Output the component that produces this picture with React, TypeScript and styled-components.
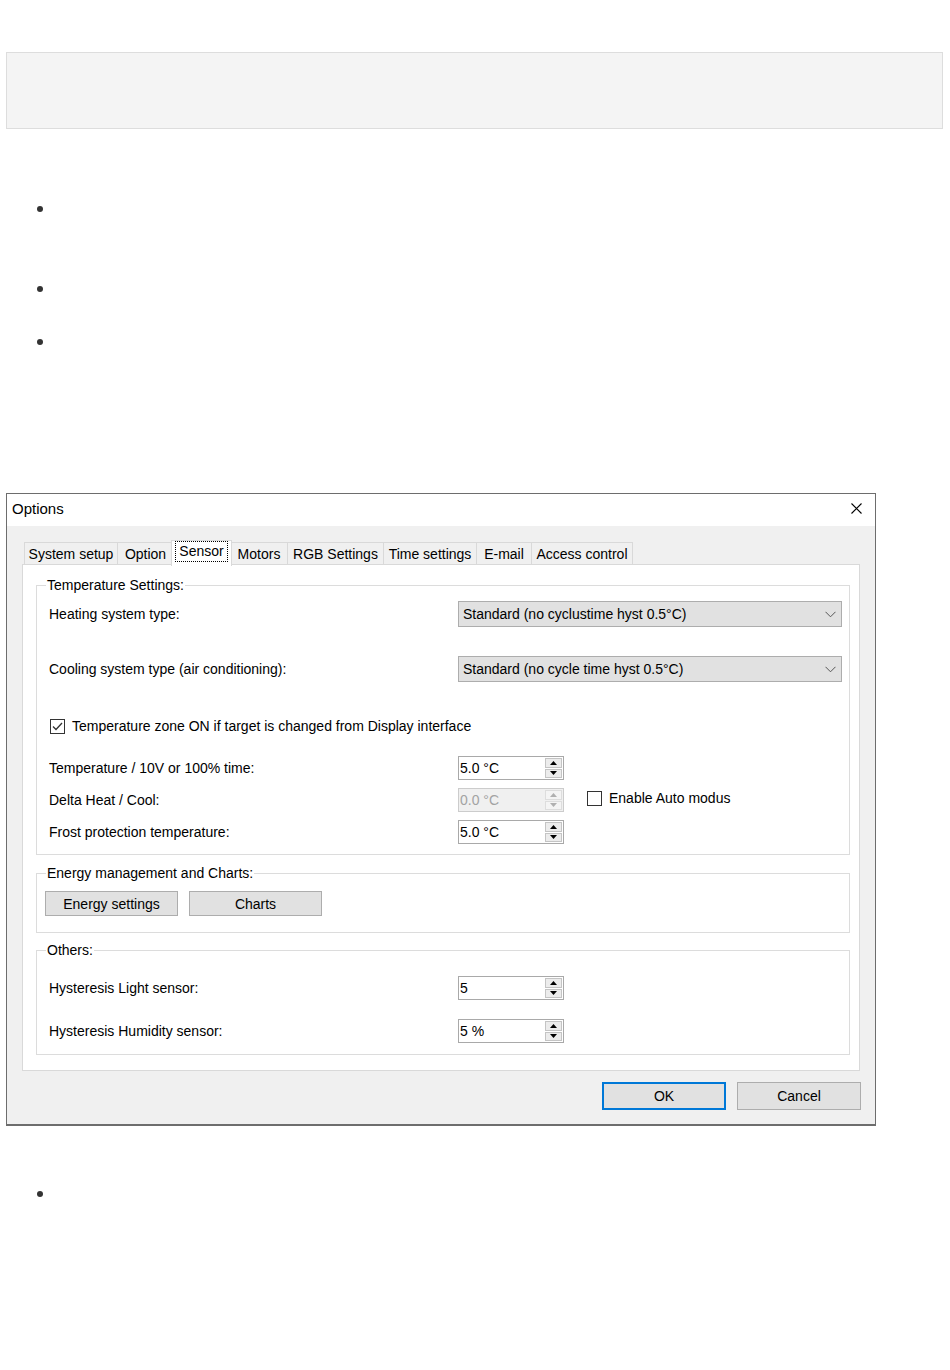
import React from 'react';
import styled, { createGlobalStyle } from 'styled-components';

const Global = createGlobalStyle`
  html, body { margin: 0; padding: 0; background: #ffffff; }
  body {
    font-family: "Liberation Sans", Arial, sans-serif;
    font-size: 14px;
    color: #000000;
  }
`;

const Page = styled.div`
  width: 950px;
  min-height: 1370px;
  box-sizing: border-box;
  padding: 52px 0 0 6px;
`;

const NoteBox = styled.div`
  width: 937px;
  height: 77px;
  box-sizing: border-box;
  background: #f4f4f4;
  border: 1px solid #dddddd;
`;

const BulletList = styled.ul<{ $mt: number }>`
  list-style: none;
  margin: ${p => p.$mt}px 0 0 0;
  padding: 0 0 0 31px;
`;

const Bullet = styled.li<{ $h: number }>`
  height: ${p => p.$h}px;
  box-sizing: border-box;
  padding-top: 6px;
  &::before {
    content: '';
    display: block;
    width: 6px;
    height: 6px;
    border-radius: 50%;
    background: #333333;
  }
`;

const Dialog = styled.div`
  width: 870px;
  box-sizing: border-box;
  margin-top: 140px;
  border: 1px solid #6d6d6d;
  border-bottom-width: 2px;
  background: #f0f0f0;
`;

const TitleBar = styled.div`
  height: 32px;
  box-sizing: border-box;
  background: #ffffff;
  display: flex;
  align-items: center;
  justify-content: space-between;
  padding: 0 13px 3px 5px;
  font-size: 15px;
`;

const DialogBody = styled.div`
  padding: 14px 15px 14px 15px;
`;

const TabStrip = styled.div`
  display: flex;
  align-items: flex-end;
  height: 24px;
  padding-left: 2px;
`;

const Tab = styled.div<{ $w: number; $active?: boolean }>`
  position: relative;
  z-index: ${p => (p.$active ? 2 : 1)};
  box-sizing: border-box;
  flex-shrink: 0;
  width: ${p => (p.$active ? p.$w + 4 : p.$w)}px;
  height: ${p => (p.$active ? 26 : 22)}px;
  margin: ${p => (p.$active ? '0 -2px -2px -2px' : '0')};
  padding-bottom: ${p => (p.$active ? 4 : 0)}px;
  border-top: 1px solid #d9d9d9;
  border-left: 1px solid #d9d9d9;
  border-right: ${p => (p.$active ? '1px solid #d9d9d9' : 'none')};
  background: ${p => (p.$active ? '#ffffff' : '#f0f0f0')};
  display: flex;
  align-items: center;
  justify-content: center;
  white-space: nowrap;
  &:last-child { border-right: 1px solid #d9d9d9; }
`;

const FocusLabel = styled.span`
  border: 1px dotted #000000;
  padding: 0 3px;
  line-height: 19px;
`;

const TabPanel = styled.div`
  background: #ffffff;
  border: 1px solid #d9d9d9;
  padding: 12px 9px 15px 13px;
`;

const Group = styled.fieldset<{ $mt?: number }>`
  margin: ${p => p.$mt ?? 0}px 0 0 0;
  padding: 0;
  border: 1px solid #dcdcdc;
  min-width: 0;
`;

const Legend = styled.legend`
  margin-left: 9px;
  padding: 0 1px;
  line-height: 16px;
  font-size: 14px;
`;

const GroupContent = styled.div<{ $pt: number; $pb: number; $pl?: number }>`
  padding: ${p => p.$pt}px 7px ${p => p.$pb}px ${p => p.$pl ?? 12}px;
`;

const Row = styled.div<{ $mt?: number }>`
  display: flex;
  align-items: center;
  margin-top: ${p => p.$mt ?? 0}px;
`;

const Label = styled.div`
  width: 409px;
  flex-shrink: 0;
  white-space: nowrap;
`;

const Combo = styled.div`
  width: 384px;
  height: 26px;
  box-sizing: border-box;
  background: #e1e1e1;
  border: 1px solid #adadad;
  display: flex;
  align-items: center;
  justify-content: space-between;
  padding: 0 5px 0 4px;
  white-space: nowrap;
`;

const CheckLine = styled.label<{ $lift?: number }>`
  display: flex;
  align-items: center;
  gap: 7px;
  margin-left: 1px;
  margin-bottom: ${p => p.$lift ?? 0}px;
  white-space: nowrap;
`;

const CheckBox = styled.span`
  width: 15px;
  height: 15px;
  box-sizing: border-box;
  border: 1px solid #333333;
  background: #ffffff;
  display: flex;
  align-items: center;
  justify-content: center;
`;

const Spin = styled.div<{ $disabled?: boolean }>`
  width: 106px;
  height: 24px;
  box-sizing: border-box;
  border: 1px solid ${p => (p.$disabled ? '#cccccc' : '#a9a9a9')};
  background: ${p => (p.$disabled ? '#f0f0f0' : '#ffffff')};
  color: ${p => (p.$disabled ? '#a3a3a3' : '#000000')};
  display: flex;
  flex-shrink: 0;
`;

const SpinValue = styled.div`
  flex: 1;
  padding-left: 1px;
  display: flex;
  align-items: center;
  white-space: nowrap;
`;

const SpinButtons = styled.div`
  width: 17px;
  display: flex;
  flex-direction: column;
  gap: 1px;
  padding: 1px 1px 1px 0;
`;

const SpinButton = styled.div<{ $disabled?: boolean }>`
  flex: 1;
  box-sizing: border-box;
  border: 1px solid ${p => (p.$disabled ? '#dddddd' : '#c4c4c4')};
  background: ${p => (p.$disabled ? '#f4f4f4' : '#ececec')};
  display: flex;
  align-items: center;
  justify-content: center;
`;

const AutoSpacer = styled.div`
  width: 22px;
  flex-shrink: 0;
`;

const ButtonRow = styled.div`
  display: flex;
  gap: 11px;
`;

const WinButton = styled.button<{ $w: number; $h: number; $default?: boolean }>`
  width: ${p => p.$w}px;
  height: ${p => p.$h}px;
  box-sizing: border-box;
  background: #e1e1e1;
  border: ${p => (p.$default ? '2px solid #0078d7' : '1px solid #adadad')};
  font-family: "Liberation Sans", Arial, sans-serif;
  font-size: 14px;
  color: #000000;
  padding: 0;
  margin: 0;
`;

const Footer = styled.div`
  display: flex;
  justify-content: flex-end;
  gap: 11px;
  margin: 11px -1px 0 0;
`;

const CloseIcon = () => (
  <svg width="11" height="11" viewBox="0 0 11 11">
    <path d="M0.5 0.5 L10.5 10.5 M10.5 0.5 L0.5 10.5" stroke="#000" strokeWidth="1.1" fill="none" />
  </svg>
);

const Chevron = () => (
  <svg width="11" height="7" viewBox="0 0 11 7">
    <polyline points="0.5,0.8 5.5,5.8 10.5,0.8" stroke="#555" strokeWidth="1" fill="none" />
  </svg>
);

const CheckMark = () => (
  <svg width="13" height="13" viewBox="0 0 13 13">
    <polyline points="2,6.5 5,9.5 11,3" stroke="#333" strokeWidth="1.3" fill="none" />
  </svg>
);

const Arrow = ({ up, disabled }: { up?: boolean; disabled?: boolean }) => (
  <svg width="7" height="4" viewBox="0 0 7 4">
    <polygon points={up ? '3.5,0 7,4 0,4' : '0,0 7,0 3.5,4'} fill={disabled ? '#b0b0b0' : '#000'} />
  </svg>
);

const SpinBox = ({ value, disabled }: { value: string; disabled?: boolean }) => (
  <Spin $disabled={disabled}>
    <SpinValue>{value}</SpinValue>
    <SpinButtons>
      <SpinButton $disabled={disabled}><Arrow up disabled={disabled} /></SpinButton>
      <SpinButton $disabled={disabled}><Arrow disabled={disabled} /></SpinButton>
    </SpinButtons>
  </Spin>
);

const tabs = [
  { label: 'System setup', w: 93 },
  { label: 'Option', w: 56 },
  { label: 'Sensor', w: 57, active: true },
  { label: 'Motors', w: 57 },
  { label: 'RGB Settings', w: 96 },
  { label: 'Time settings', w: 93 },
  { label: 'E-mail', w: 55 },
  { label: 'Access control', w: 102 },
];

export default function App() {
  return (
    <>
      <Global />
      <Page>
        <NoteBox />
        <BulletList $mt={71}>
          <Bullet $h={80} />
          <Bullet $h={53} />
          <Bullet $h={20} />
        </BulletList>

        <Dialog>
          <TitleBar>
            <span>Options</span>
            <CloseIcon />
          </TitleBar>
          <DialogBody>
            <TabStrip>
              {tabs.map(t => (
                <Tab key={t.label} $w={t.w} $active={t.active}>
                  {t.active ? <FocusLabel>{t.label}</FocusLabel> : t.label}
                </Tab>
              ))}
            </TabStrip>
            <TabPanel>
              <Group>
                <Legend>Temperature Settings:</Legend>
                <GroupContent $pt={8} $pb={10}>
                  <Row>
                    <Label>Heating system type:</Label>
                    <Combo>
                      <span>Standard (no cyclustime hyst 0.5°C)</span>
                      <Chevron />
                    </Combo>
                  </Row>
                  <Row $mt={29}>
                    <Label>Cooling system type (air conditioning):</Label>
                    <Combo>
                      <span>Standard (no cycle time hyst 0.5°C)</span>
                      <Chevron />
                    </Combo>
                  </Row>
                  <Row $mt={36}>
                    <CheckLine>
                      <CheckBox><CheckMark /></CheckBox>
                      Temperature zone ON if target is changed from Display interface
                    </CheckLine>
                  </Row>
                  <Row $mt={22}>
                    <Label>Temperature / 10V or 100% time:</Label>
                    <SpinBox value="5.0 °C" />
                  </Row>
                  <Row $mt={8}>
                    <Label>Delta Heat / Cool:</Label>
                    <SpinBox value="0.0 °C" disabled />
                    <AutoSpacer />
                    <CheckLine $lift={4}>
                      <CheckBox />
                      Enable Auto modus
                    </CheckLine>
                  </Row>
                  <Row $mt={8}>
                    <Label>Frost protection temperature:</Label>
                    <SpinBox value="5.0 °C" />
                  </Row>
                </GroupContent>
              </Group>

              <Group $mt={10}>
                <Legend>Energy management and Charts:</Legend>
                <GroupContent $pt={10} $pb={16} $pl={8}>
                  <ButtonRow>
                    <WinButton $w={133} $h={25}>Energy settings</WinButton>
                    <WinButton $w={133} $h={25}>Charts</WinButton>
                  </ButtonRow>
                </GroupContent>
              </Group>

              <Group $mt={9}>
                <Legend>Others:</Legend>
                <GroupContent $pt={18} $pb={11}>
                  <Row>
                    <Label>Hysteresis Light sensor:</Label>
                    <SpinBox value="5" />
                  </Row>
                  <Row $mt={19}>
                    <Label>Hysteresis Humidity sensor:</Label>
                    <SpinBox value="5 %" />
                  </Row>
                </GroupContent>
              </Group>
            </TabPanel>
            <Footer>
              <WinButton $w={124} $h={28} $default>OK</WinButton>
              <WinButton $w={124} $h={28}>Cancel</WinButton>
            </Footer>
          </DialogBody>
        </Dialog>

        <BulletList $mt={59}>
          <Bullet $h={20} />
        </BulletList>
      </Page>
    </>
  );
}
